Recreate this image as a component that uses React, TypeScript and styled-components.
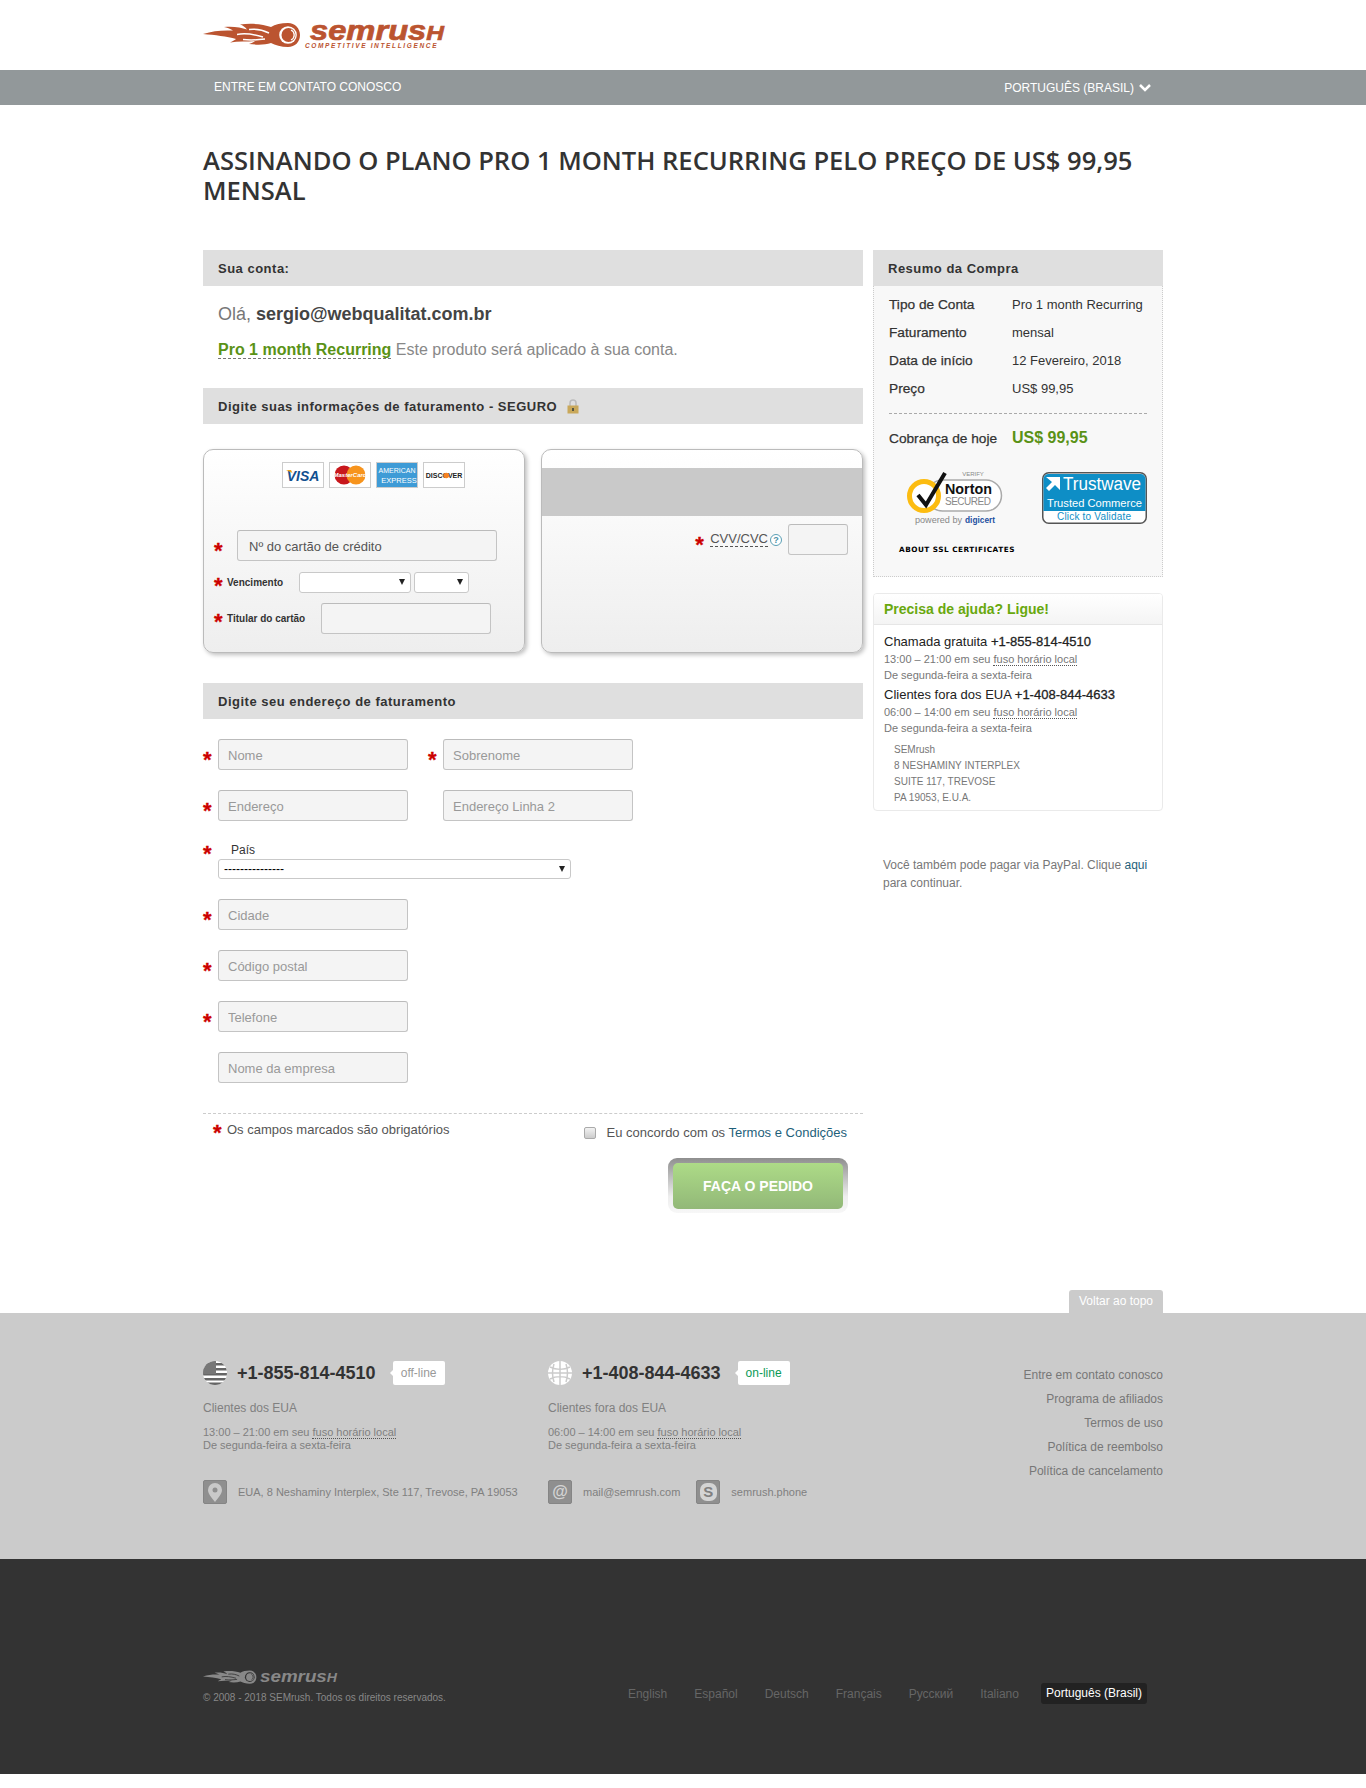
import React from 'react';
import styled, { createGlobalStyle } from 'styled-components';

const Global = createGlobalStyle`
  html, body { margin: 0; padding: 0; background: #fff; }
  body { font-family: "Liberation Sans", Arial, sans-serif; color: #333; }
  * { box-sizing: border-box; }
  input::placeholder { color: #999; opacity: 1; }
`;

const Page = styled.div`
  width: 1366px;
  height: 1788px;
  overflow: hidden;
`;
const Wrap = styled.div`
  width: 960px;
  margin: 0 auto;
`;
const Header = styled.header`
  height: 70px;
`;
const LogoBox = styled.div`
  padding-top: 20px;
`;
const BlockSvg = styled.svg`
  display: block;
  overflow: visible;
`;
const NavBar = styled.nav`
  height: 35px;
  background: #92989a;
`;
const NavInner = styled(Wrap)`
  height: 35px;
  display: flex;
  justify-content: space-between;
  align-items: center;
  padding: 0 11px 2px 11px;
  color: #fff;
  font-size: 12px;
`;
const NavLang = styled.span`
  display: flex;
  align-items: center;
  gap: 4px;
  margin-top: 2px;
`;
const Title = styled.h1`
  margin: 40px 0 45px;
  font-family: "Open Sans", "Noto Sans", sans-serif;
  font-weight: 600;
  font-size: 25.55px;
  line-height: 30px;
  color: #333;
`;
const Columns = styled.div`
  display: flex;
  gap: 10px;
  align-items: flex-start;
`;
const LeftCol = styled.div`
  width: 660px;
`;
const RightCol = styled.aside`
  width: 290px;
`;
const SectionHead = styled.h2<{ $top?: number }>`
  height: 36px;
  margin: ${(p) => p.$top ?? 0}px 0 0;
  padding: 0 15px;
  display: flex;
  align-items: center;
  gap: 10px;
  background: #dfdfdf;
  color: #333;
  font-size: 13px;
  font-weight: 700;
  letter-spacing: 0.5px;
`;
const Greeting = styled.div`
  margin: 17px 0 0 15px;
  font-size: 18px;
  line-height: 22px;
  color: #777;
  b { color: #444; }
`;
const ProLine = styled.div`
  margin: 15px 0 0 15px;
  font-size: 16px;
  line-height: 20px;
  color: #888;
  b {
    color: #5a9216;
    border-bottom: 1px dashed #777;
  }
`;
const CardRow = styled.div`
  display: flex;
  gap: 16px;
  margin-top: 25px;
`;
const Card = styled.div`
  width: 322px;
  height: 204px;
  border: 1px solid #bbb;
  border-radius: 10px;
  background: linear-gradient(#fff, #eee);
  box-shadow: 2px 2px 4px rgba(0, 0, 0, 0.25);
  overflow: hidden;
`;
const CardFront = styled(Card)`
  padding: 12px 10px 0 10px;
`;
const Logos = styled.div`
  display: flex;
  gap: 5px;
  margin-left: 68px;
`;
const PayLogo = styled.div`
  width: 42px;
  height: 26px;
  border: 1px solid #ccc;
  background: #fff;
  display: flex;
  align-items: center;
  justify-content: center;
  overflow: hidden;
`;
const Star = styled.span<{ $lift?: number }>`
  color: #c00;
  font-size: 22px;
  font-weight: 700;
  line-height: 22px;
  height: 12px;
  width: 8px;
  margin-top: ${(p) => -(p.$lift ?? 0)}px;
  font-family: "Liberation Sans", Arial, sans-serif;
  flex: none;
  -webkit-text-stroke: 0.3px #c00;
`;
const CardRowLine = styled.div<{ $top: number }>`
  display: flex;
  align-items: center;
  margin-top: ${(p) => p.$top}px;
`;
const SmallLabel = styled.span<{ $w: number }>`
  width: ${(p) => p.$w}px;
  flex: none;
  font-size: 10px;
  font-weight: 700;
  color: #333;
  padding-left: 5px;
`;
const TextInput = styled.input<{ $w: number }>`
  width: ${(p) => p.$w}px;
  height: 31px;
  flex: none;
  padding: 2px 8px 0 9px;
  border: 1px solid #c4c4c4;
  border-top-color: #bbb;
  border-radius: 3px;
  background: #f4f4f4;
  font: 13px "Liberation Sans", Arial, sans-serif;
  color: #333;
  outline: none;
`;
const CardNumber = styled(TextInput)`
  margin-left: 8px;
  padding-left: 11px;
  &::placeholder { color: #555; }
`;
const SelectWrap = styled.span<{ $w: number; $ml?: number }>`
  position: relative;
  display: block;
  flex: none;
  width: ${(p) => p.$w}px;
  margin-left: ${(p) => p.$ml ?? 0}px;
  &::after {
    content: '';
    position: absolute;
    right: 6px;
    top: 7px;
    border-left: 3px solid transparent;
    border-right: 3px solid transparent;
    border-top: 6px solid #222;
  }
`;
const Select = styled.select<{ $h: number }>`
  display: block;
  width: 100%;
  height: ${(p) => p.$h}px;
  appearance: none;
  border: 1px solid #c9c9c9;
  border-radius: 3px;
  background: #fff;
  padding: 0 5px;
  font: 12px "Liberation Sans", Arial, sans-serif;
  color: #000;
`;
const CardBack = styled(Card)`
  padding-top: 18px;
`;
const Stripe = styled.div`
  height: 48px;
  background: #c9c9c9;
`;
const CvvLine = styled.div`
  display: flex;
  align-items: center;
  justify-content: flex-end;
  margin: 8px 14px 0 0;
`;
const CvvLabel = styled.span`
  margin-left: 7px;
  font-size: 13px;
  line-height: 14px;
  color: #555;
  border-bottom: 1px dashed #555;
`;
const Help = styled.span`
  width: 12px;
  height: 12px;
  margin: 0 6px 0 2px;
  border-radius: 50%;
  border: 1px solid #5a9fb5;
  color: #4a90a8;
  font-size: 9px;
  font-weight: 700;
  line-height: 10px;
  text-align: center;
  flex: none;
  background: #fff;
`;
const Form = styled.div`
  margin-top: 20px;
`;
const FormRow = styled.div<{ $top?: number }>`
  display: flex;
  gap: 20px;
  margin-top: ${(p) => p.$top ?? 20}px;
`;
const Field = styled.div`
  display: flex;
  align-items: center;
  width: 205px;
`;
const StarSlot = styled.span`
  width: 15px;
  flex: none;
  display: flex;
`;
const CountryLabel = styled.div`
  display: flex;
  align-items: center;
  height: 18px;
  font-size: 12px;
  color: #333;
`;
const CountryText = styled.span`
  margin-left: 13px;
`;
const CountryIndent = styled.div`
  margin-left: 15px;
`;
const Dashed = styled.div`
  margin-top: 30px;
  border-top: 1px dashed #ccc;
`;
const NoteRow = styled.div`
  display: flex;
  justify-content: space-between;
  padding: 6px 16px 0 10px;
`;
const Note = styled.div`
  display: flex;
  align-items: center;
  align-self: flex-start;
  gap: 6px;
  margin-top: 2px;
  font-size: 13px;
  line-height: 15px;
  color: #555;
`;
const Terms = styled.label`
  display: flex;
  align-items: center;
  gap: 11px;
  margin-top: 5px;
  font-size: 13px;
  line-height: 15px;
  color: #555;
  a { color: #1e5f7a; text-decoration: none; }
`;
const Check = styled.input`
  appearance: none;
  width: 12px;
  height: 12px;
  margin: 0;
  border: 1px solid #aaa;
  border-radius: 2px;
  background: linear-gradient(#f2f2f2, #ccc);
`;
const ButtonRow = styled.div`
  display: flex;
  justify-content: flex-end;
  padding-right: 15px;
  margin-top: 18px;
`;
const ButtonFrame = styled.div`
  width: 180px;
  height: 55px;
  padding: 5px;
  border-radius: 9px;
  background: linear-gradient(#8e8e8e, #eee 70%, #f7f7f7);
`;
const Submit = styled.button`
  display: block;
  width: 170px;
  height: 46px;
  border: none;
  border-radius: 5px;
  background: linear-gradient(#addb87, #92b878);
  color: #fff;
  font: 700 14px "Liberation Sans", Arial, sans-serif;
`;
const Summary = styled.div`
  height: 291px;
  padding: 4px 15px 0 15px;
  background: #f8f8f8;
  border: 1px dotted #ccc;
  border-top: none;
`;
const SumRow = styled.div`
  display: flex;
  align-items: center;
  height: 28px;
  font-size: 13px;
  color: #333;
`;
const SumLabel = styled.span`
  width: 123px;
  flex: none;
  font-size: 13.7px;
  white-space: nowrap;
  -webkit-text-stroke: 0.25px #333;
`;
const SumDash = styled.div`
  margin-top: 11px;
  border-top: 1px dashed #aaa;
`;
const SumTotal = styled.div`
  display: flex;
  align-items: center;
  height: 30px;
  margin-top: 9px;
  color: #333;
  b { color: #5a9216; font-size: 16px; }
`;
const Seals = styled.div`
  display: flex;
  justify-content: space-between;
  align-items: flex-start;
  margin-top: 17px;
  padding-left: 18px;
`;
const TrustSlot = styled.div`
  margin-top: 2px;
`;
const SslLink = styled.div`
  margin: 19px 0 0 10px;
  font: 700 7.3px "DejaVu Sans", Verdana, sans-serif;
  letter-spacing: 0.5px;
  color: #000;
`;
const HelpBox = styled.div`
  height: 218px;
  margin-top: 16px;
  border: 1px solid #eaeaea;
  border-radius: 4px;
  overflow: hidden;
`;
const HelpTitle = styled.div`
  height: 31px;
  padding: 0 10px 1px;
  display: flex;
  align-items: center;
  background: linear-gradient(#fff, #f4f4f4);
  border-bottom: 1px solid #e6e6e6;
  color: #69a80e;
  font-size: 14px;
  font-weight: 700;
`;
const HelpBody = styled.div`
  padding: 8px 10px 0;
`;
const HelpPhone = styled.div<{ $top?: number }>`
  margin-top: ${(p) => p.$top ?? 0}px;
  font-size: 13px;
  line-height: 18px;
  color: #222;
  b { font-weight: 400; -webkit-text-stroke: 0.3px #222; }
`;
const HelpSmall = styled.div`
  font-size: 11px;
  line-height: 16px;
  color: #777;
  u { text-decoration: none; border-bottom: 1px dotted #555; }
`;
const HelpAddr = styled.div`
  margin: 6px 0 0 10px;
  font-size: 10px;
  line-height: 16px;
  color: #777;
`;
const Paypal = styled.p`
  margin: 45px 0 0 10px;
  font-size: 12px;
  line-height: 18px;
  color: #777;
  a { color: #1e5f7a; text-decoration: none; }
`;
const TabRow = styled(Wrap)`
  display: flex;
  justify-content: flex-end;
  margin-top: 77px;
`;
const TopTab = styled.div`
  width: 94px;
  height: 23px;
  border-radius: 3px 3px 0 0;
  background: #cbcbcb;
  color: #fff;
  font-size: 12px;
  line-height: 23px;
  text-align: center;
`;
const Footer = styled.footer`
  height: 246px;
  background: #cbcbcb;
`;
const FooterInner = styled(Wrap)`
  display: flex;
  padding-top: 48px;
`;
const FootCol = styled.div<{ $w: number }>`
  width: ${(p) => p.$w}px;
  flex: none;
`;
const PhoneLine = styled.div`
  display: flex;
  align-items: center;
  height: 24px;
`;
const PhoneNum = styled.span`
  margin-left: 10px;
  font-size: 18px;
  font-weight: 700;
  color: #333;
`;
const Badge = styled.span<{ $on?: boolean }>`
  position: relative;
  margin-left: 17px;
  width: 52px;
  height: 24px;
  background: #fff;
  border-radius: 2px;
  font-size: 12px;
  line-height: 24px;
  text-align: center;
  color: ${(p) => (p.$on ? '#0a9a55' : '#999')};
  &::before {
    content: '';
    position: absolute;
    left: -3px;
    top: 9px;
    border-top: 3px solid transparent;
    border-bottom: 3px solid transparent;
    border-right: 3px solid #fff;
  }
`;
const FootWho = styled.div`
  margin-top: 15px;
  font-size: 12px;
  line-height: 16px;
  color: #808080;
`;
const FootHours = styled.div`
  margin-top: 10px;
  font-size: 11px;
  line-height: 13px;
  color: #808080;
  u { text-decoration: none; border-bottom: 1px dotted #555; }
`;
const ContactRow = styled.div`
  display: flex;
  align-items: center;
  margin-top: 28px;
  font-size: 11px;
  color: #808080;
`;
const ContactIcon = styled.span<{ $ml?: number }>`
  width: 24px;
  height: 24px;
  margin: 0 11px 0 ${(p) => p.$ml ?? 0}px;
  flex: none;
  background: #8f8f8f;
  border: 1px solid #858585;
  border-radius: 2px;
  display: flex;
  align-items: center;
  justify-content: center;
  color: #d4d4d4;
  font-size: 16px;
  font-weight: 700;
`;
const SkypeBlob = styled.span`
  width: 17px;
  height: 18px;
  border-radius: 7px;
  background: #d4d4d4;
  color: #808080;
  font-size: 15px;
  line-height: 18px;
  text-align: center;
`;
const FootLinks = styled.div`
  margin-left: auto;
  margin-top: 2px;
  font-size: 12px;
  line-height: 24px;
  text-align: right;
  color: #777;
`;
const Dark = styled.div`
  height: 215px;
  background: #333;
`;
const DarkInner = styled(Wrap)`
  display: flex;
  justify-content: space-between;
  padding-top: 111px;
`;
const Copy = styled.div`
  margin-top: 8px;
  font-size: 10px;
  color: #888;
`;
const Langs = styled.div`
  display: flex;
  gap: 27px;
  align-items: center;
  height: 21px;
  margin: 13px 16px 0 0;
  font-size: 12px;
  color: #666;
`;
const ActiveLang = styled.span`
  height: 21px;
  line-height: 21px;
  margin-left: -5px;
  padding: 0 5px;
  border-radius: 3px;
  background: #222;
  color: #fff;
`;

const FLAME =
  'M0 14C10 11 18 10 30 10.500C27 8.500 24 7.500 21 7C30 6 38 7.500 44 9.500C42 7 40 5.500 37 4.500C48 3 60 4 68 7C72 4.500 78 3 85 3C92 3 97 8.500 97 15C97 22 92 27 85 27C78 27 72 25 68 23C62 25 54 25 46 24C49 23 51 22 52 21C44 22 35 21 27 22.500C30 21 32 20 33 19C24 16.500 12 15 0 14Z';

const FlameMark = ({ fill, hole }: { fill: string; hole: string }) => (
  <g>
    <path d={FLAME} fill={fill} />
    <path d="M34 14.500C42 13 50 14 60 17M46 9.500C54 8.500 60 10 66 13M40 19.500C48 20.500 54 20 62 19" stroke={hole} strokeWidth="1.500" fill="none" />
    <circle cx="85" cy="15" r="8.800" fill={hole} />
    <circle cx="85.500" cy="15" r="7" fill={fill} />
    <path d="M88 10A5.500 5.500 0 0 1 88 20" stroke={hole} strokeWidth="1.300" fill="none" />
  </g>
);

const Logo = () => (
  <BlockSvg width="243" height="30" viewBox="0 0 243 30">
    <FlameMark fill="#bb5430" hole="#fff" />
    <text x="107" y="20" fontFamily="Liberation Sans" fontWeight="700" fontStyle="italic" fontSize="28" fill="#bb5430" stroke="#bb5430" strokeWidth="0.700" textLength="134" lengthAdjust="spacingAndGlyphs">
      semrus<tspan fontSize="21">H</tspan>
    </text>
    <text x="102" y="27.500" fontFamily="Liberation Sans" fontWeight="700" fontStyle="italic" fontSize="6.500" fill="#bb5430" textLength="133" letterSpacing="1.500">COMPETITIVE  INTELLIGENCE</text>
  </BlockSvg>
);

const DarkLogo = () => (
  <BlockSvg width="134" height="14" viewBox="0 0 134 14">
    <g transform="scale(0.55) translate(0,-2)">
      <FlameMark fill="#888" hole="#333" />
    </g>
    <text x="57" y="12" fontFamily="Liberation Sans" fontWeight="700" fontStyle="italic" fontSize="16" fill="#888" textLength="77" lengthAdjust="spacingAndGlyphs">
      semrus<tspan fontSize="12">H</tspan>
    </text>
  </BlockSvg>
);

const Visa = () => (
  <svg width="40" height="24" viewBox="0 0 40 24">
    <text x="20" y="17.500" textAnchor="middle" fontFamily="Liberation Sans" fontWeight="700" fontStyle="italic" fontSize="14" fill="#12508f">VISA</text>
    <path d="M3 7h5l1.500 3z" fill="#eda41c" />
  </svg>
);
const Master = () => (
  <svg width="40" height="24" viewBox="0 0 40 24">
    <circle cx="14" cy="12" r="9.500" fill="#c8171c" />
    <circle cx="26" cy="12" r="9.500" fill="#f7941d" />
    <text x="20" y="14" textAnchor="middle" fontFamily="Liberation Sans" fontWeight="700" fontStyle="italic" fontSize="6" fill="#fff">MasterCard</text>
  </svg>
);
const Amex = () => (
  <BlockSvg width="42" height="26" viewBox="0 0 42 26">
    <rect width="42" height="26" fill="#3e9bd6" />
    <text x="21" y="11" textAnchor="middle" fontFamily="Liberation Sans" fontSize="7" fill="#fff">AMERICAN</text>
    <text x="23" y="21" textAnchor="middle" fontFamily="Liberation Sans" fontSize="7.500" fill="#fff">EXPRESS</text>
  </BlockSvg>
);
const Discover = () => (
  <svg width="40" height="24" viewBox="0 0 40 24">
    <text x="20" y="15" textAnchor="middle" fontFamily="Liberation Sans" fontWeight="700" fontSize="7" fill="#222">DISCOVER</text>
    <circle cx="22.300" cy="12.500" r="2.800" fill="#f58220" />
  </svg>
);

const Norton = () => (
  <BlockSvg width="96" height="56" viewBox="0 0 96 56">
    <text x="66" y="5.500" textAnchor="middle" fontFamily="Liberation Sans" fontSize="6" fill="#888">VERIFY</text>
    <rect x="20" y="10" width="74.500" height="31" rx="15.500" fill="#fff" stroke="#aaa" strokeWidth="1.500" />
    <circle cx="17" cy="26" r="14.500" fill="#fff" stroke="#fcbc11" strokeWidth="5" />
    <path d="M11 25l8 10L38 3" fill="none" stroke="#111" strokeWidth="4" />
    <text x="38" y="24" fontFamily="Liberation Sans" fontWeight="700" fontSize="15.500" fill="#111" textLength="47" lengthAdjust="spacingAndGlyphs">Norton</text>
    <text x="38" y="35" fontFamily="Liberation Sans" fontSize="10" fill="#888" textLength="46">SECURED</text>
    <text x="8" y="53" fontFamily="Liberation Sans" fontSize="9" fill="#888" textLength="47" lengthAdjust="spacingAndGlyphs">powered by</text>
    <text x="58" y="53" fontFamily="Liberation Sans" fontWeight="700" fontSize="9" fill="#1c4fa0" textLength="30" lengthAdjust="spacingAndGlyphs">digicert</text>
  </BlockSvg>
);

const Trustwave = () => (
  <BlockSvg width="105" height="52" viewBox="0 0 105 52">
    <rect x="0.750" y="0.750" width="103.500" height="50.500" rx="6" fill="#fff" stroke="#555" strokeWidth="1.500" />
    <path d="M1.500 7a5 5 0 0 1 5-5h92a5 5 0 0 1 5 5v32H1.500z" fill="#0e8ec6" />
    <path d="M4 5h14v13l-5-5-6 6-3-3 6-6z" fill="#fff" />
    <text x="21" y="18" fontFamily="Liberation Sans" fontSize="18" fill="#fff" textLength="78" lengthAdjust="spacingAndGlyphs">Trustwave</text>
    <text x="5" y="35" fontFamily="Liberation Sans" fontSize="11.500" fill="#fff" textLength="95" lengthAdjust="spacingAndGlyphs">Trusted Commerce</text>
    <text x="52" y="48" textAnchor="middle" fontFamily="Liberation Sans" fontSize="10" fill="#0e8ec6" textLength="74">Click to Validate</text>
  </BlockSvg>
);

const Lock = () => (
  <svg width="12" height="15" viewBox="0 0 12 15">
    <path d="M3 7V4a3 3 0 0 1 6 0v3" fill="none" stroke="#bbb" strokeWidth="1.500" />
    <rect x="0.500" y="6.500" width="11" height="8" fill="#c9a85a" />
    <rect x="5" y="9" width="2" height="3" fill="#554" />
  </svg>
);

const Chevron = () => (
  <svg width="14" height="10" viewBox="0 0 14 10">
    <path d="M2 2l5 5 5-5" fill="none" stroke="#fff" strokeWidth="2.500" />
  </svg>
);

const UsFlag = () => (
  <svg width="24" height="24" viewBox="0 0 24 24">
    <defs><clipPath id="fl"><circle cx="12" cy="12" r="12" /></clipPath></defs>
    <g clipPath="url(#fl)">
      <rect width="24" height="24" fill="#fff" />
      <path d="M0 2h24v2.500H0zM0 7h24v2.500H0zM0 12h24v2.500H0zM0 17h24v2.500H0zM0 21.500h24V24H0z" fill="#666" />
      <rect width="13" height="13" fill="#777" />
    </g>
  </svg>
);
const Globe = () => (
  <svg width="24" height="24" viewBox="0 0 24 24">
    <circle cx="12" cy="12" r="12" fill="#fff" />
    <path d="M12 0v24M2 6c6 3 14 3 20 0M2 18c6-3 14-3 20 0M0 12h24M6 3c-2 6-2 12 0 18M18 3c2 6 2 12 0 18" stroke="#cbcbcb" strokeWidth="1.500" fill="none" />
  </svg>
);
const Pin = () => (
  <svg width="14" height="19" viewBox="0 0 14 19">
    <path d="M7 0a7 7 0 0 1 7 7c0 4-4 8-7 12C4 15 0 11 0 7a7 7 0 0 1 7-7z" fill="#c9c9c9" />
    <circle cx="7" cy="7" r="2.500" fill="#8f8f8f" />
  </svg>
);

export default function App() {
  return (
    <Page>
      <Global />
      <Header>
        <Wrap>
          <LogoBox>
            <Logo />
          </LogoBox>
        </Wrap>
      </Header>
      <NavBar>
        <NavInner>
          <span>ENTRE EM CONTATO CONOSCO</span>
          <NavLang>
            PORTUGUÊS (BRASIL) <Chevron />
          </NavLang>
        </NavInner>
      </NavBar>
      <Wrap>
        <Title>ASSINANDO O PLANO PRO 1 MONTH RECURRING PELO PREÇO DE US$ 99,95 MENSAL</Title>
        <Columns>
          <LeftCol>
            <SectionHead>Sua conta:</SectionHead>
            <Greeting>
              Olá, <b>sergio@webqualitat.com.br</b>
            </Greeting>
            <ProLine>
              <b>Pro 1 month Recurring</b> Este produto será aplicado à sua conta.
            </ProLine>
            <SectionHead $top={28}>
              Digite suas informações de faturamento - SEGURO <Lock />
            </SectionHead>
            <CardRow>
              <CardFront>
                <Logos>
                  <PayLogo><Visa /></PayLogo>
                  <PayLogo><Master /></PayLogo>
                  <PayLogo><Amex /></PayLogo>
                  <PayLogo><Discover /></PayLogo>
                </Logos>
                <CardRowLine $top={42}>
                  <StarSlot><Star>*</Star></StarSlot>
                  <CardNumber $w={260} placeholder="Nº do cartão de crédito" />
                </CardRowLine>
                <CardRowLine $top={11}>
                  <Star $lift={4}>*</Star>
                  <SmallLabel $w={77}>Vencimento</SmallLabel>
                  <SelectWrap $w={112}><Select $h={21} aria-label="Mês" /></SelectWrap>
                  <SelectWrap $w={55} $ml={3}><Select $h={21} aria-label="Ano" /></SelectWrap>
                </CardRowLine>
                <CardRowLine $top={10}>
                  <Star $lift={4}>*</Star>
                  <SmallLabel $w={99}>Titular do cartão</SmallLabel>
                  <TextInput $w={170} />
                </CardRowLine>
              </CardFront>
              <CardBack>
                <Stripe />
                <CvvLine>
                  <Star>*</Star>
                  <CvvLabel>CVV/CVC</CvvLabel>
                  <Help>?</Help>
                  <TextInput $w={60} />
                </CvvLine>
              </CardBack>
            </CardRow>
            <SectionHead $top={30}>Digite seu endereço de faturamento</SectionHead>
            <Form>
              <FormRow $top={0}>
                <Field><StarSlot><Star>*</Star></StarSlot><TextInput $w={190} placeholder="Nome" /></Field>
                <Field><StarSlot><Star>*</Star></StarSlot><TextInput $w={190} placeholder="Sobrenome" /></Field>
              </FormRow>
              <FormRow>
                <Field><StarSlot><Star>*</Star></StarSlot><TextInput $w={190} placeholder="Endereço" /></Field>
                <Field><StarSlot /><TextInput $w={190} placeholder="Endereço Linha 2" /></Field>
              </FormRow>
              <FormRow>
                <div>
                  <CountryLabel>
                    <StarSlot><Star $lift={2}>*</Star></StarSlot>
                    <CountryText>País</CountryText>
                  </CountryLabel>
                  <CountryIndent>
                    <SelectWrap $w={353}>
                      <Select $h={20} aria-label="País" defaultValue="-">
                        <option value="-">---------------</option>
                      </Select>
                    </SelectWrap>
                  </CountryIndent>
                </div>
              </FormRow>
              <FormRow>
                <Field><StarSlot><Star>*</Star></StarSlot><TextInput $w={190} placeholder="Cidade" /></Field>
              </FormRow>
              <FormRow>
                <Field><StarSlot><Star>*</Star></StarSlot><TextInput $w={190} placeholder="Código postal" /></Field>
              </FormRow>
              <FormRow>
                <Field><StarSlot><Star>*</Star></StarSlot><TextInput $w={190} placeholder="Telefone" /></Field>
              </FormRow>
              <FormRow>
                <Field><StarSlot /><TextInput $w={190} placeholder="Nome da empresa" /></Field>
              </FormRow>
            </Form>
            <Dashed />
            <NoteRow>
              <Note><Star $lift={3}>*</Star> Os campos marcados são obrigatórios</Note>
              <Terms>
                <Check type="checkbox" />
                <span>Eu concordo com os <a href="#t">Termos e Condições</a></span>
              </Terms>
            </NoteRow>
            <ButtonRow>
              <ButtonFrame>
                <Submit type="button">FAÇA O PEDIDO</Submit>
              </ButtonFrame>
            </ButtonRow>
          </LeftCol>
          <RightCol>
            <SectionHead>Resumo da Compra</SectionHead>
            <Summary>
              <SumRow><SumLabel>Tipo de Conta</SumLabel>Pro 1 month Recurring</SumRow>
              <SumRow><SumLabel>Faturamento</SumLabel>mensal</SumRow>
              <SumRow><SumLabel>Data de início</SumLabel>12 Fevereiro, 2018</SumRow>
              <SumRow><SumLabel>Preço</SumLabel>US$ 99,95</SumRow>
              <SumDash />
              <SumTotal><SumLabel>Cobrança de hoje</SumLabel><b>US$ 99,95</b></SumTotal>
              <Seals>
                <Norton />
                <TrustSlot><Trustwave /></TrustSlot>
              </Seals>
              <SslLink>ABOUT SSL CERTIFICATES</SslLink>
            </Summary>
            <HelpBox>
              <HelpTitle>Precisa de ajuda? Ligue!</HelpTitle>
              <HelpBody>
                <HelpPhone>Chamada gratuita <b>+1-855-814-4510</b></HelpPhone>
                <HelpSmall>13:00 – 21:00 em seu <u>fuso horário local</u></HelpSmall>
                <HelpSmall>De segunda-feira a sexta-feira</HelpSmall>
                <HelpPhone $top={3}>Clientes fora dos EUA <b>+1-408-844-4633</b></HelpPhone>
                <HelpSmall>06:00 – 14:00 em seu <u>fuso horário local</u></HelpSmall>
                <HelpSmall>De segunda-feira a sexta-feira</HelpSmall>
                <HelpAddr>
                  SEMrush<br />8 NESHAMINY INTERPLEX<br />SUITE 117, TREVOSE<br />PA 19053, E.U.A.
                </HelpAddr>
              </HelpBody>
            </HelpBox>
            <Paypal>
              Você também pode pagar via PayPal. Clique <a href="#a">aqui</a><br />para continuar.
            </Paypal>
          </RightCol>
        </Columns>
      </Wrap>
      <TabRow>
        <TopTab>Voltar ao topo</TopTab>
      </TabRow>
      <Footer>
        <FooterInner>
          <FootCol $w={345}>
            <PhoneLine>
              <UsFlag />
              <PhoneNum>+1-855-814-4510</PhoneNum>
              <Badge>off-line</Badge>
            </PhoneLine>
            <FootWho>Clientes dos EUA</FootWho>
            <FootHours>
              13:00 – 21:00 em seu <u>fuso horário local</u><br />De segunda-feira a sexta-feira
            </FootHours>
            <ContactRow>
              <ContactIcon><Pin /></ContactIcon>
              EUA, 8 Neshaminy Interplex, Ste 117, Trevose, PA 19053
            </ContactRow>
          </FootCol>
          <FootCol $w={300}>
            <PhoneLine>
              <Globe />
              <PhoneNum>+1-408-844-4633</PhoneNum>
              <Badge $on>on-line</Badge>
            </PhoneLine>
            <FootWho>Clientes fora dos EUA</FootWho>
            <FootHours>
              06:00 – 14:00 em seu <u>fuso horário local</u><br />De segunda-feira a sexta-feira
            </FootHours>
            <ContactRow>
              <ContactIcon>@</ContactIcon>
              mail@semrush.com
              <ContactIcon $ml={16}><SkypeBlob>S</SkypeBlob></ContactIcon>
              semrush.phone
            </ContactRow>
          </FootCol>
          <FootLinks>
            Entre em contato conosco<br />
            Programa de afiliados<br />
            Termos de uso<br />
            Política de reembolso<br />
            Política de cancelamento
          </FootLinks>
        </FooterInner>
      </Footer>
      <Dark>
        <DarkInner>
          <div>
            <DarkLogo />
            <Copy>© 2008 - 2018 SEMrush. Todos os direitos reservados.</Copy>
          </div>
          <Langs>
            <span>English</span>
            <span>Español</span>
            <span>Deutsch</span>
            <span>Français</span>
            <span>Русский</span>
            <span>Italiano</span>
            <ActiveLang>Português (Brasil)</ActiveLang>
          </Langs>
        </DarkInner>
      </Dark>
    </Page>
  );
}
